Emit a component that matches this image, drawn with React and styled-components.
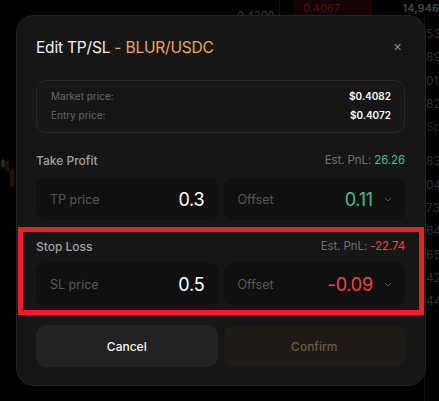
import React from 'react';
import styled, { createGlobalStyle } from 'styled-components';

const Global = createGlobalStyle`
  html, body { margin: 0; padding: 0; background: #000; }
  body { font-family: Inter, "Noto Sans", sans-serif; overflow: hidden; }
  * { box-sizing: border-box; }
`;

const Screen = styled.div`
  position: relative;
  width: 439px;
  height: 401px;
  background: #020202;
  overflow: hidden;
  display: flex;
  flex-direction: column;
`;

const TopStrip = styled.div`
  height: 16px;
  display: flex;
  align-items: flex-start;
  font-size: 11px;
`;

const StripCell = styled.div`
  height: ${p => p.low ? 22 : 16}px;
  display: flex;
  align-items: ${p => p.low ? 'flex-end' : 'center'};
  width: ${p => p.w}px;
  justify-content: ${p => p.right ? 'flex-end' : 'flex-start'};
  padding-left: ${p => p.pl || 0}px;
  color: ${p => p.c};
  background: ${p => p.bg || 'transparent'};
  border-right: ${p => p.line ? '1px solid #111' : 'none'};
  font-weight: ${p => p.bold ? 600 : 400};
  white-space: nowrap;
`;

const Body = styled.div`
  flex: 1;
  display: flex;
`;

const ChartArea = styled.div`
  width: 425px;
  flex-shrink: 0;
  border-right: 1px solid #141414;
`;

const Candles = styled.svg`
  margin-top: 140px;
`;

const Book = styled.div`
  display: flex;
  flex-direction: column;
  padding-top: 6px;
  padding-left: 1px;
  font-size: 12px;
  white-space: nowrap;
`;

const BookRow = styled.div`
  height: 23.3px;
  line-height: 23.3px;
  color: ${p => p.dim ? '#1e1e1e' : '#303030'};
  margin-bottom: ${p => p.gap || 0}px;
`;

const Modal = styled.div`
  position: absolute;
  left: 16px;
  top: 15px;
  width: 410px;
  height: 371px;
  background: #161616;
  border: 1px solid #232323;
  border-radius: 18px;
  padding: 21px 20px 18px 19px;
  display: flex;
  flex-direction: column;
`;

const TitleRow = styled.div`
  height: 20px;
  display: flex;
  align-items: center;
  justify-content: space-between;
  margin-bottom: 23px;
`;

const Title = styled.div`
  font-size: 15.5px;
  color: #f2f2f2;
  letter-spacing: -0.2px;
  span { color: #eea862; }
`;

const Close = styled.div`
  color: #8a8a8a;
  font-size: 11px;
  margin-right: 3px;
  line-height: 1;
`;

const InfoBox = styled.div`
  border: 1px solid #272727;
  border-radius: 10px;
  padding: 8px 13px 10px 14px;
  display: flex;
  flex-direction: column;
  gap: 5px;
  margin-bottom: 19px;
`;

const InfoRow = styled.div`
  height: 14px;
  display: flex;
  align-items: center;
  justify-content: space-between;
  font-size: 10px;
`;

const InfoLabel = styled.span`
  color: #666;
`;

const InfoValue = styled.span`
  color: #fff;
  font-weight: 600;
`;

const Section = styled.div`
  display: flex;
  flex-direction: column;
  gap: ${p => p.gap}px;
  ${p => p.marked && `
    border: 5px solid #e8202a;
    margin: 0 -19px 0 -18px;
    padding: 6px 14px 4px 13px;
  `}
`;

const SectionHead = styled.div`
  height: 16px;
  display: flex;
  align-items: center;
  justify-content: space-between;
  font-size: 12px;
`;

const SectionTitle = styled.span`
  color: #a3a3a3;
  font-weight: 500;
`;

const Pnl = styled.span`
  color: #707070;
  font-size: 11.5px;
  letter-spacing: -0.1px;
  b { font-weight: 400; color: ${p => p.c}; }
`;

const Inputs = styled.div`
  display: grid;
  grid-template-columns: 1fr 1fr;
  gap: 6px;
`;

const Field = styled.div`
  height: ${p => p.h}px;
  background: #101010;
  border-radius: 9px;
  display: flex;
  align-items: center;
  padding: 0 13px 0 14px;
`;

const FieldLabel = styled.span`
  color: #575757;
  font-size: 12.5px;
  flex: 1;
`;

const FieldValue = styled.span`
  color: ${p => p.c || '#fff'};
  font-size: 18px;
  letter-spacing: -0.2px;
`;

const Chevron = styled.svg`
  margin-left: 11px;
`;

const Buttons = styled.div`
  display: grid;
  grid-template-columns: 1fr 1fr;
  gap: 6px;
  margin-top: 10px;
`;

const Button = styled.div`
  height: 42px;
  border-radius: 10px;
  display: flex;
  align-items: center;
  justify-content: center;
  font-size: 12px;
  font-weight: 500;
  background: ${p => p.primary ? '#1d1b17' : '#222222'};
  color: ${p => p.primary ? '#6a5a40' : '#f4f4f4'};
`;

const Down = () => (
  <Chevron width="8" height="5" viewBox="0 0 8 5">
    <path d="M1 1l3 3 3-3" stroke="#555" strokeWidth="1" fill="none" />
  </Chevron>
);

function PriceField({ label, value, color, h, dropdown }) {
  return (
    <Field h={h}>
      <FieldLabel>{label}</FieldLabel>
      <FieldValue c={color}>{value}</FieldValue>
      {dropdown && <Down />}
    </Field>
  );
}

const bookRows = [
  { v: '53' }, { v: '89' }, { v: '01' }, { v: '82' },
  { v: 'Sp', dim: true, gap: 11 },
  { v: '83' }, { v: '04' }, { v: '73' }, { v: '64' },
  { v: '65' }, { v: '42' }, { v: '44' },
];

export default function App() {
  return (
    <>
      <Global />
      <Screen>
        <TopStrip>
          <StripCell w={220} />
          <StripCell w={60} c="#3a3a3a" pl={17} line low>0.4200</StripCell>
          <StripCell w={14} />
          <StripCell w={78} c="#4a1414" bg="#140404" pl={9}>0.4087</StripCell>
          <StripCell w={67} c="#454545" right bold>14,946</StripCell>
        </TopStrip>
        <Body>
          <ChartArea>
            <Candles width="20" height="40" viewBox="0 0 20 40">
              <line x1="3" y1="2" x2="3" y2="12" stroke="#0f2a24" />
              <rect x="1.5" y="4" width="3" height="7" fill="#143a30" />
              <rect x="5" y="5" width="4" height="10" fill="#2a0c0c" />
              <line x1="12" y1="12" x2="12" y2="33" stroke="#2a0c0c" />
              <rect x="10" y="14" width="4" height="16" fill="#2e0d0d" />
            </Candles>
          </ChartArea>
          <Book>
            {bookRows.map((r, i) => (
              <BookRow key={i} dim={r.dim} gap={r.gap}>{r.v}</BookRow>
            ))}
          </Book>
        </Body>

        <Modal>
          <TitleRow>
            <Title>Edit TP/SL <span>- BLUR/USDC</span></Title>
            <Close>✕</Close>
          </TitleRow>

          <InfoBox>
            <InfoRow>
              <InfoLabel>Market price:</InfoLabel>
              <InfoValue>$0.4082</InfoValue>
            </InfoRow>
            <InfoRow>
              <InfoLabel>Entry price:</InfoLabel>
              <InfoValue>$0.4072</InfoValue>
            </InfoRow>
          </InfoBox>

          <Section gap={10}>
            <SectionHead>
              <SectionTitle>Take Profit</SectionTitle>
              <Pnl c="#3fc08f">Est. PnL: <b>26.26</b></Pnl>
            </SectionHead>
            <Inputs>
              <PriceField label="TP price" value="0.3" h={42} />
              <PriceField label="Offset" value="0.11" color="#3fc08f" h={42} dropdown />
            </Inputs>
          </Section>

          <div style={{ height: 7 }} />

          <Section gap={9} marked>
            <SectionHead>
              <SectionTitle>Stop Loss</SectionTitle>
              <Pnl c="#f2434f">Est. PnL: <b>-22.74</b></Pnl>
            </SectionHead>
            <Inputs>
              <PriceField label="SL price" value="0.5" h={43} />
              <PriceField label="Offset" value="-0.09" color="#f2434f" h={43} dropdown />
            </Inputs>
          </Section>

          <Buttons>
            <Button>Cancel</Button>
            <Button primary>Confirm</Button>
          </Buttons>
        </Modal>
      </Screen>
    </>
  );
}
